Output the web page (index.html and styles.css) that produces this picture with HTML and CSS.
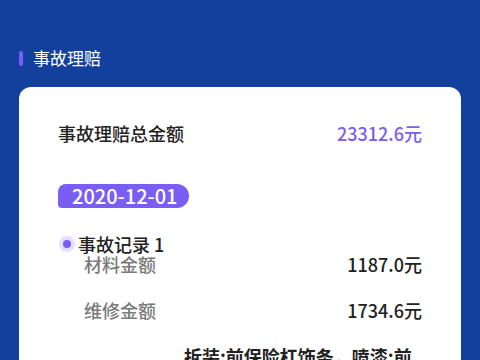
FILE: index.html
```html
<!DOCTYPE html>
<html lang="zh-CN">
<head>
    <meta charset="UTF-8">
    <meta name="viewport" content="width=device-width, initial-scale=1.0">
    <title>事故理赔</title>
    <link rel="stylesheet" href="styles.css">
</head>
<body>
    <div class="section-title">
        <span class="title-bar"></span>
        <h2>事故理赔</h2>
    </div>

    <div class="card">
        <div class="total-row">
            <span class="total-label">事故理赔总金额</span>
            <span class="total-value">23312.6元</span>
        </div>

        <div class="date-pill">2020-12-01</div>

        <div class="record">
            <div class="record-head">
                <span class="dot"></span>
                <span class="record-name">事故记录 1</span>
            </div>
            <div class="record-rows">
                <div class="row">
                    <span class="row-label">材料金额</span>
                    <span class="row-value">1187.0元</span>
                </div>
                <div class="row">
                    <span class="row-label">维修金额</span>
                    <span class="row-value">1734.6元</span>
                </div>
                <div class="row">
                    <span class="row-label"></span>
                    <span class="row-detail">拆装:前保险杠饰条，喷漆:前保险杠皮</span>
                </div>
            </div>
        </div>
    </div>
</body>
</html>
```

FILE: styles.css
```css
body {
    margin: 0;
    padding: 0;
    background-color: #12409c;
    font-family: "Noto Sans CJK SC", "Noto Sans", sans-serif;
    overflow: hidden;
}
.section-title {
    display: flex;
    align-items: center;
    gap: 10px;
    margin: 48px 0 0 19px;
    height: 20px;
}
.title-bar {
    width: 4px;
    height: 15px;
    border-radius: 2px;
    background-color: #7a5df5;
}
h2 {
    margin: 0;
    font-size: 17px;
    font-weight: 400;
    line-height: 20px;
    color: #ffffff;
}
.card {
    margin: 19px 19px 0 19px;
    padding: 34px 39px 40px 39px;
    background-color: #ffffff;
    border-radius: 12px;
}
.total-row {
    display: flex;
    justify-content: space-between;
    align-items: center;
    height: 24px;
    font-size: 18px;
    font-weight: 500;
}
.total-label {
    color: #222222;
}
.total-value {
    color: #7a5df5;
}
.date-pill {
    display: inline-block;
    margin-top: 39px;
    padding: 0 12px 0 14px;
    height: 24px;
    line-height: 24px;
    font-size: 20px;
    font-weight: 500;
    color: #ffffff;
    background-color: #7a5df5;
    border-radius: 8px 12px 12px 4px;
}
.record {
    margin-top: 25px;
}
.record-head {
    display: flex;
    align-items: center;
    gap: 7px;
    height: 20px;
}
.dot {
    width: 8px;
    height: 8px;
    margin-left: 5px;
    border-radius: 50%;
    background-color: #7a5df5;
    box-shadow: 0 0 0 4px #e5defd;
}
.record-name {
    font-size: 18px;
    font-weight: 500;
    color: #222222;
    line-height: 20px;
}
.record-rows {
    display: flex;
    flex-direction: column;
    gap: 28px;
    margin-top: 1px;
    padding-left: 26px;
}
.row {
    display: flex;
    justify-content: space-between;
    align-items: flex-start;
    font-size: 18px;
    line-height: 18px;
    font-weight: 500;
}
.row-label {
    color: #7a7a7a;
}
.row-value {
    color: #222222;
}
.row-detail {
    width: 238px;
    color: #222222;
    font-weight: 700;
}
```
